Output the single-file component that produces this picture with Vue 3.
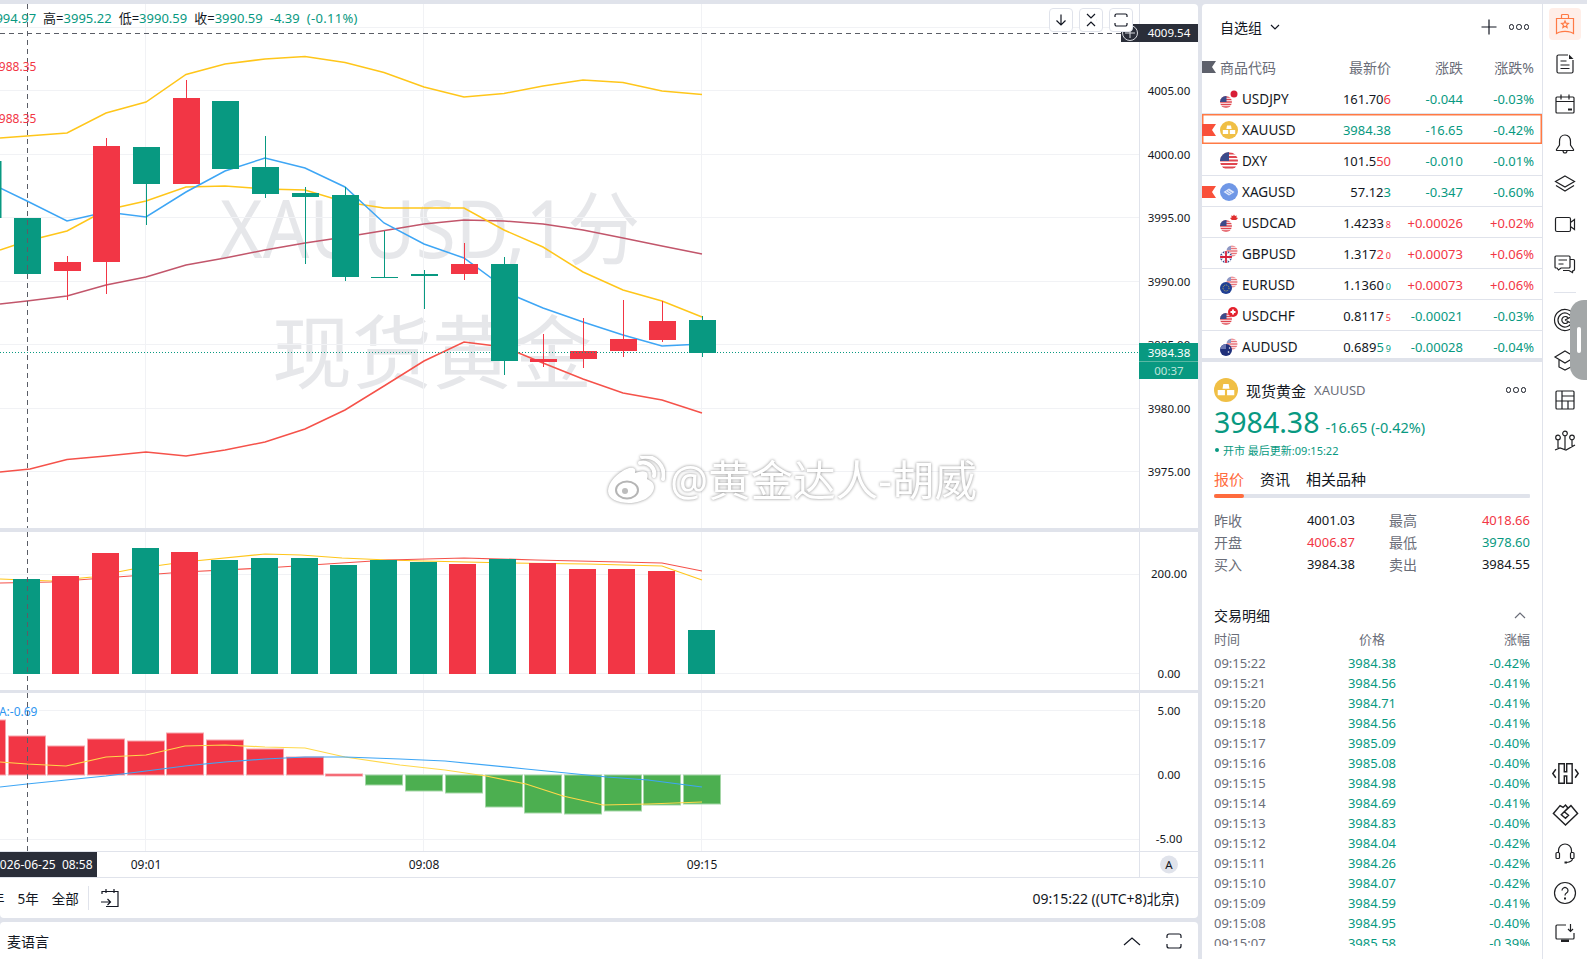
<script setup>
// 主图数据，坐标直接取图上的像素
const candles = [
  [-12, 161, 218, 161, 218, 'g'],
  [27.5, 218, 274, 218, 274, 'g'],
  [67.5, 262, 271, 256, 300, 'r'],
  [106.5, 146, 262, 138, 294, 'r'],
  [146.5, 147, 184, 147, 225, 'g'],
  [186.5, 98, 184, 80, 184, 'r'],
  [225.5, 101, 169, 101, 169, 'g'],
  [265.5, 167, 194, 136, 198, 'g'],
  [305.5, 193, 197, 187, 264, 'g'],
  [345.5, 195, 277, 187, 281, 'g'],
  [384.5, 277, 278, 231, 278, 'g'],
  [424.5, 274, 276, 270, 309, 'g'],
  [464.5, 264, 274, 243, 280, 'r'],
  [504.5, 264, 361, 257, 375, 'g'],
  [543.5, 359, 362, 334, 367, 'r'],
  [583.5, 351, 359, 318, 368, 'r'],
  [623.5, 339, 351, 300, 357, 'r'],
  [662.5, 321, 340, 301, 342, 'r'],
  [702.5, 320, 353, 316, 357, 'g']
]

const mainLines = [
  { color: '#c2566b', points: '0,304 27,301 67,296 106,285 146,277 186,265 225,258 265,250 305,243 345,237 400,228 424,224 464,220 504,221 543,224 583,230 623,238 662,246 702,254' },
  { color: '#f5524a', points: '0,472 30,469 67,459.5 106,456 146,452 186,456 225,450 265,442 305,429 345,410 384,386 424,361 464,342 504,347 543,363 583,379 623,393 662,400 702,413' },
  { color: '#ffc61a', points: '0,138 27,136 67,133 106,113 146,102 186,74.5 225,64 265,59 305,56.5 345,62.5 384,72.5 424,87 464,97 504,93.5 543,86 583,80 623,82.5 662,91 702,94.5' },
  { color: '#ffc61a', points: '0,250 27,241 67,231 106,210 146,201 186,187 225,186 265,189 305,190 345,202 384,208 424,208 464,208 504,230 543,247 583,272 623,290 662,301 702,317' },
  { color: '#3ea6f5', points: '0,188 27,201 67,221 106,212 146,217 186,192 225,171 265,158 305,168 345,187 384,223 424,244 464,258 517,297 543,308 583,322 623,335 662,346 702,344' }
]

const priceTicks = [
  ['4010.00', 27], ['4005.00', 90], ['4000.00', 154], ['3995.00', 217],
  ['3990.00', 281], ['3985.00', 344], ['3980.00', 408], ['3975.00', 471]
]

const centers = [26.5, 65.5, 105.5, 145.5, 184.5, 224.5, 264.5, 304.5, 343.5, 383.5, 423.5, 462.5, 502.5, 542.5, 582.5, 621.5, 661.5, 701.5]

// 成交量柱顶部
const volumes = [579, 576, 553, 548, 552, 560, 558, 558, 565, 560, 562, 564, 559, 563, 569, 569, 571, 630]
const volColors = 'grrgrggggggrgrrrrg'

const volLines = [
  { color: '#ffc61a', points: '0,579 51,581 92,577 133,569 184,562 265,554 301,555 342,558 388,560 423,561 510,563 587,564 662,566 702,580' },
  { color: '#f5524a', points: '0,583 51,582 117,577 184,572 265,568 342,563 388,560 464,558 536,560 662,563 702,571' }
]

// MACD 柱，[中心, 顶, 底]
const macdBars = [
  [-13, 720, 775, 'r'], [27, 736, 775, 'r'], [66, 746, 775, 'r'], [106, 739, 775, 'r'], [146, 741, 775, 'r'],
  [185, 733, 775, 'r'], [225, 740, 775, 'r'], [265, 749, 775, 'r'], [305, 757, 775, 'r'], [344, 774, 776, 'r'],
  [384, 775, 785, 'g'], [424, 775, 791, 'g'], [464, 775, 793, 'g'], [504, 775, 807, 'g'], [543, 775, 813, 'g'],
  [583, 775, 814, 'g'], [623, 775, 811, 'g'], [662, 775, 805, 'g'], [702, 775, 804, 'g']
]

const macdLines = [
  { color: '#ffd84a', points: '0,762 27,764 66,766 106,757 146,755 185,746 225,745 265,747 305,748 345,757 400,765 445,770 486,776 526,784 563,796 603,805 648,804 702,802' },
  { color: '#3ea6f5', points: '0,787 27,784 66,780 106,776 146,771 185,766 225,762 265,759 305,757 345,757 400,759 445,761 526,769 607,777 648,780 702,787' }
]

const watchlist = [
  { flag: '', icon: 'jpy', name: 'USDJPY', price: '161.70', hi: '6', hiColor: 'up', chg: '-0.044', pct: '-0.03%', dir: 'down' },
  { flag: 'red', icon: 'gold', name: 'XAUUSD', price: '', hi: '3984.38', hiColor: 'down', chg: '-16.65', pct: '-0.42%', dir: 'down', active: true },
  { flag: '', icon: 'dxy', name: 'DXY', price: '101.5', hi: '50', hiColor: 'up', chg: '-0.010', pct: '-0.01%', dir: 'down' },
  { flag: 'red', icon: 'silver', name: 'XAGUSD', price: '57.12', hi: '3', hiColor: 'down', chg: '-0.347', pct: '-0.60%', dir: 'down' },
  { flag: '', icon: 'cad', name: 'USDCAD', price: '1.4233', small: '8', hiColor: 'up', chg: '+0.00026', pct: '+0.02%', dir: 'up' },
  { flag: '', icon: 'gbp', name: 'GBPUSD', price: '1.317', hi: '2', small: '0', hiColor: 'up', chg: '+0.00073', pct: '+0.06%', dir: 'up' },
  { flag: '', icon: 'eur', name: 'EURUSD', price: '1.1360', small: '0', hiColor: 'down', chg: '+0.00073', pct: '+0.06%', dir: 'up' },
  { flag: '', icon: 'chf', name: 'USDCHF', price: '0.8117', small: '5', hiColor: 'up', chg: '-0.00021', pct: '-0.03%', dir: 'down' },
  { flag: '', icon: 'aud', name: 'AUDUSD', price: '0.689', hi: '5', small: '9', hiColor: 'down', chg: '-0.00028', pct: '-0.04%', dir: 'down' }
]

const trades = [
  ['09:15:22', '3984.38', '-0.42%'], ['09:15:21', '3984.56', '-0.41%'], ['09:15:20', '3984.71', '-0.41%'],
  ['09:15:18', '3984.56', '-0.41%'], ['09:15:17', '3985.09', '-0.40%'], ['09:15:16', '3985.08', '-0.40%'],
  ['09:15:15', '3984.98', '-0.40%'], ['09:15:14', '3984.69', '-0.41%'], ['09:15:13', '3984.83', '-0.40%'],
  ['09:15:12', '3984.04', '-0.42%'], ['09:15:11', '3984.26', '-0.42%'], ['09:15:10', '3984.07', '-0.42%'],
  ['09:15:09', '3984.59', '-0.41%'], ['09:15:08', '3984.95', '-0.40%'], ['09:15:07', '3985.58', '-0.39%']
]

// 右侧工具条图标
const railTop = [
  { active: true, d: 'M3.5 6.5h17v15l-2.500-1.200q-6-1.800-12 0l-2.500 1.200zM8.500 6.500v-3a1 1 0 0 1 1-1h5a1 1 0 0 1 1 1v3M12 9l1 2.200 2.400.3-1.800 1.600.5 2.400-2.100-1.200-2.100 1.200.5-2.400-1.800-1.600 2.400-.3z' },
  { d: 'M15 3H5.500A1.500 1.500 0 0 0 4 4.500v15A1.500 1.500 0 0 0 5.500 21h13a1.500 1.500 0 0 0 1.500-1.500V8M7.500 9h6M7.500 13h9M7.500 16.500h9', f: 'M16 2.500l4.500 4.500H16z' },
  { d: 'M4 5h16a1 1 0 0 1 1 1v14a1 1 0 0 1-1 1H4a1 1 0 0 1-1-1V6a1 1 0 0 1 1-1zM3 9.500h18M8 2.500v5M16 2.500v5', f: 'M15 16.500h4v2h-4z' },
  { d: 'M12 3c-3.600 0-5.500 3-5.500 6.500V13l-3 4.500c-.3.500 0 1 .6 1h15.800c.6 0 .9-.5.6-1l-3-4.500V9.500C17.500 6 15.600 3 12 3zM10 18.500c0 1.500.9 2.500 2 2.500s2-1 2-2.500' },
  { d: 'M12 4l9.500 5.500L12 15 2.500 9.500zM3 13.500 12 19l9-5.500' },
  { d: 'M4 5.500h12a1.500 1.500 0 0 1 1.500 1.500v11a1.500 1.500 0 0 1-1.500 1.500H4A1.500 1.500 0 0 1 2.500 18V7A1.500 1.500 0 0 1 4 5.500zM17.500 10.500l4-3v10l-4-3' },
  { d: 'M3 4h13a1 1 0 0 1 1 1v10a1 1 0 0 1-1 1H8l-2.500 2L4 16H3a1 1 0 0 1-1-1V5a1 1 0 0 1 1-1zM5.500 8h8.500M5.500 12h5M17 7.500h3.500a1 1 0 0 1 1 1v9a1 1 0 0 1-1 1H20l-.5 2-3.500-2h-6' }
]
const railMid = [
  { d: 'M21.500 7.500A10.500 10.500 0 1 0 21.500 16.500M18.500 9.500A7 7 0 1 0 18.500 14.500M15.500 10.500A3.500 3.500 0 1 0 15.500 13.500M12 12l10-5M12 12l10 5' },
  { d: 'M12 3l10 6-10 6L2 9zM6 12v7l6 3 6-3v-7' },
  { d: 'M4 3h16a1 1 0 0 1 1 1v16a1 1 0 0 1-1 1H4a1 1 0 0 1-1-1V4a1 1 0 0 1 1-1zM9 3v18M9 8h12M3 13h18M15 13v8' },
  { d: 'M2 22l5-2 6 2 9-5M5 12v8M12 8v13M19 12v7M7.300 9.500a2.300 2.300 0 1 1-4.600 0 2.300 2.300 0 0 1 4.600 0zM14.300 5.500a2.300 2.300 0 1 1-4.600 0 2.300 2.300 0 0 1 4.600 0zM21.300 9.500a2.300 2.300 0 1 1-4.600 0 2.300 2.300 0 0 1 4.600 0z' }
]
const railBottom = [
  { size: 29, d: 'M4 8.500 1.500 12 4 15.500M20 8.500l2.500 3.500-2.500 3.500M6.500 4H11v6.500h2V4h4.500v16H13v-6h-2v6H6.500z' },
  { size: 29, d: 'M7.500 5.500 2 12l10 9.500L22 12l-5.500-6.500-5.500 5 3.500 3-2.500 2.500-3.500-3 5.500-5.500-2-2.500-2 2-2.500-1.500z' },
  { d: 'M5.500 12V9.500a6.500 6.500 0 0 1 13 0V12M4 11.500h1.500a1 1 0 0 1 1 1v4a1 1 0 0 1-1 1H4a1 1 0 0 1-1-1v-4a1 1 0 0 1 1-1zM18.500 11.500H20a1 1 0 0 1 1 1v4a1 1 0 0 1-1 1h-1.500a1 1 0 0 1-1-1v-4a1 1 0 0 1 1-1zM19.500 17.500c0 2-2.500 3.500-6 4', f: 'M11.500 20.500h2.500v2h-2.500z' },
  { d: 'M22.500 12a10.500 10.500 0 1 1-21 0 10.500 10.500 0 0 1 21 0zM9 9.500a3 3 0 1 1 4.500 2.600c-1 .6-1.500 1.200-1.500 2.400', f: 'M11 16.500h2v2h-2z' },
  { d: 'M13 4H4a1 1 0 0 0-1 1v12a1 1 0 0 0 1 1h16a1 1 0 0 0 1-1v-5M17.500 3v7M15 8l2.500 2.500L20 8', f: 'M8 18.500h8V21H8z' }
]
</script>

<template>
  <div class="page">
    <!-- 隐藏的图标定义 -->
    <svg class="defs" width="0" height="0">
      <defs>
        <clipPath id="c-big"><circle cx="10" cy="10" r="9" /></clipPath>
        <clipPath id="c-ll"><circle cx="7" cy="13" r="6" /></clipPath>
        <clipPath id="c-ur"><circle cx="13" cy="7" r="5.500" /></clipPath>
        <g id="us-ll" clip-path="url(#c-ll)">
          <rect x="1" y="7" width="12" height="12" fill="#fff" />
          <path d="M1 8h12M1 10.500h12M1 13h12M1 15.500h12M1 18h12" stroke="#e0464f" stroke-width="1.300" />
          <rect x="1" y="7" width="6.500" height="6" fill="#3b4a8a" />
        </g>
        <g id="us-ur" clip-path="url(#c-ur)" opacity=".75">
          <rect x="7" y="1" width="12" height="12" fill="#fff" />
          <path d="M7 2h12M7 4.500h12M7 7h12M7 9.500h12M7 12h12" stroke="#e0464f" stroke-width="1.300" />
          <rect x="7" y="1" width="5" height="5" fill="#6a76b0" />
        </g>
        <g id="us-big" clip-path="url(#c-big)">
          <rect x="1" y="1" width="18" height="18" fill="#fff" />
          <path d="M1 2.500h18M1 6h18M1 9.500h18M1 13h18M1 16.500h18" stroke="#e0464f" stroke-width="1.800" />
          <rect x="1" y="1" width="9" height="9" fill="#3b4a8a" />
        </g>
        <g id="gold-coin">
          <circle cx="10" cy="10" r="9" fill="#f0bf45" />
          <path d="M8 5.500h4l.6 3.500H7.400zM3.800 10h5.400v4H3.800zM10.800 10h5.400v4h-5.400z" fill="#fff" />
        </g>
      </defs>
    </svg>

    <main class="left">
      <!-- K线主图 -->
      <section class="pane pane-main">
        <svg class="plot" width="1198" height="524" viewBox="0 4 1198 524">
          <text class="wm" x="220" y="258" textLength="420" lengthAdjust="spacingAndGlyphs">XAUUSD,1分</text>
          <text class="wm" x="272" y="382">现货黄金</text>
          <g class="grid">
            <line v-for="t in priceTicks" :key="t[0]" x1="0" x2="1139" :y1="t[1] + 0.500" :y2="t[1] + 0.500" />
            <line x1="145.500" x2="145.500" y1="4" y2="528" />
            <line x1="423.500" x2="423.500" y1="4" y2="528" />
            <line x1="701.500" x2="701.500" y1="4" y2="528" />
          </g>
          <polyline v-for="(l, i) in mainLines" :key="i" :points="l.points" :stroke="l.color" fill="none" stroke-width="1.500" />
          <g v-for="c in candles" :key="c[0]" :class="c[5] === 'g' ? 'bar-g' : 'bar-r'">
            <rect :x="c[0] - 0.500" :y="c[3]" width="1" :height="c[4] - c[3]" />
            <rect :x="c[0] - 13.500" :y="c[1]" width="27" :height="c[2] - c[1]" />
          </g>
          <line class="last-line" x1="0" x2="1139" y1="352.500" y2="352.500" />
          <line class="cross" x1="0" x2="1139" y1="33.500" y2="33.500" />
          <line class="cross" x1="27.500" x2="27.500" y1="4" y2="528" />
          <text class="red-label" x="-8" y="71">3988.35</text>
          <text class="red-label" x="-8" y="123">3988.35</text>
          <line class="axis-line" x1="1139.500" x2="1139.500" y1="4" y2="528" />
          <text v-for="t in priceTicks" :key="t[0]" class="tick" x="1169" :y="t[1] + 4.500">{{ t[0] }}</text>
          <rect x="1121" y="24" width="77" height="18" fill="#2a2e39" />
          <circle cx="1130" cy="33" r="7.500" fill="none" stroke="#d8dae0" stroke-width="1" />
          <path d="M1130 28v10M1125 33h10" stroke="#d8dae0" stroke-width="1" />
          <text class="tick tick-white" x="1169" y="37">4009.54</text>
          <rect x="1139" y="343" width="59" height="36" fill="#089981" />
          <line x1="1139" x2="1198" y1="361.500" y2="361.500" stroke="#5bb8a4" />
          <text class="tick tick-white" x="1169" y="356.500">3984.38</text>
          <text class="tick tick-soft" x="1169" y="375">00:37</text>
        </svg>

        <div class="legend">
          <span class="green">3994.97</span>
          <span>高=<b>3995.22</b></span>
          <span>低=<b>3990.59</b></span>
          <span>收=<b>3990.59</b></span>
          <span class="green">-4.39</span>
          <span class="green legend-pct">(-0.11%)</span>
        </div>

        <div class="tools">
          <button class="tool-btn">
            <svg width="16" height="16" viewBox="0 0 16 16"><path d="M8 2.500v10M3.500 8.500 8 13l4.500-4.500" /></svg>
          </button>
          <button class="tool-btn">
            <svg width="16" height="16" viewBox="0 0 16 16"><path d="M4 2l4 4 4-4M4 14l4-4 4 4M3 8h.1M13 8h.1" /></svg>
          </button>
          <button class="tool-btn">
            <svg width="16" height="16" viewBox="0 0 16 16"><path d="M2 5V3.500A1.500 1.500 0 0 1 3.500 2h9A1.500 1.500 0 0 1 14 3.500V5M2 11v1.500A1.500 1.500 0 0 0 3.500 14h9a1.500 1.500 0 0 0 1.500-1.500V11" /></svg>
          </button>
        </div>

        <!-- 微博水印 -->
        <div class="weibo">
          <svg width="58" height="48" viewBox="0 0 58 48">
            <path d="M22 12C10 16 1 27 1 35c0 8 10 12 21 12 13 0 25-7 25-16 0-5-5-7-7-8 1-3 1-6-1-7-3-2-8 0-11 1 1-3 0-6-6-5z" fill="#fff" />
            <ellipse cx="20" cy="34" rx="11" ry="8.500" fill="none" stroke="#b5b5b5" stroke-width="2" />
            <circle cx="18" cy="35" r="3" fill="#bdbdbd" />
            <path d="M33 7c8-2 16 5 14 13M35 1c13-2 24 9 21 22" fill="none" stroke="#fff" stroke-width="4" stroke-linecap="round" />
          </svg>
          <span>@黄金达人-胡威</span>
        </div>
      </section>

      <!-- 成交量 -->
      <section class="pane pane-vol">
        <svg class="plot" width="1198" height="158" viewBox="0 532 1198 158">
          <g class="grid">
            <line x1="0" x2="1139" y1="574.500" y2="574.500" />
            <line x1="0" x2="1139" y1="673.500" y2="673.500" />
            <line x1="145.500" x2="145.500" y1="532" y2="690" />
            <line x1="423.500" x2="423.500" y1="532" y2="690" />
            <line x1="701.500" x2="701.500" y1="532" y2="690" />
          </g>
          <polyline v-for="(l, i) in volLines" :key="i" :points="l.points" :stroke="l.color" fill="none" stroke-width="1.200" />
          <rect v-for="(top, i) in volumes" :key="i" :class="volColors[i] === 'g' ? 'bar-g' : 'bar-r'"
            :x="centers[i] - 13.500" :y="top" width="27" :height="674 - top" />
          <line class="cross" x1="27.500" x2="27.500" y1="532" y2="690" />
          <line class="axis-line" x1="1139.500" x2="1139.500" y1="532" y2="690" />
          <text class="tick" x="1169" y="578">200.00</text>
          <text class="tick" x="1169" y="678">0.00</text>
        </svg>
      </section>

      <!-- MACD -->
      <section class="pane pane-macd">
        <svg class="plot" width="1198" height="158" viewBox="0 693 1198 158">
          <g class="grid">
            <line x1="0" x2="1139" y1="710.500" y2="710.500" />
            <line x1="0" x2="1139" y1="774.500" y2="774.500" />
            <line x1="0" x2="1139" y1="839.500" y2="839.500" />
            <line x1="145.500" x2="145.500" y1="693" y2="851" />
            <line x1="423.500" x2="423.500" y1="693" y2="851" />
            <line x1="701.500" x2="701.500" y1="693" y2="851" />
          </g>
          <rect v-for="b in macdBars" :key="b[0]" :class="b[3] === 'g' ? 'macd-g' : 'macd-r'"
            :x="b[0] - 18.500" :y="b[1]" width="37" :height="b[2] - b[1]" />
          <polyline v-for="(l, i) in macdLines" :key="i" :points="l.points" :stroke="l.color" fill="none" stroke-width="1.200" />
          <rect x="0" y="704" width="39" height="14" fill="#fff" />
          <text class="macd-label" x="-12" y="716">MA:-0.69</text>
          <line class="cross" x1="27.500" x2="27.500" y1="693" y2="851" />
          <line class="axis-line" x1="1139.500" x2="1139.500" y1="693" y2="851" />
          <text class="tick" x="1169" y="715">5.00</text>
          <text class="tick" x="1169" y="779">0.00</text>
          <text class="tick" x="1169" y="843">-5.00</text>
        </svg>
      </section>

      <!-- 时间轴 -->
      <section class="time-axis">
        <svg class="plot" width="1198" height="26" viewBox="0 851 1198 26">
          <rect x="0" y="852" width="97" height="25" fill="#2a2e39" />
          <text class="time time-white" x="-7" y="869">2026-06-25&#160;&#160;08:58</text>
          <text class="time" x="146" y="869" text-anchor="middle">09:01</text>
          <text class="time" x="424" y="869" text-anchor="middle">09:08</text>
          <text class="time" x="702" y="869" text-anchor="middle">09:15</text>
          <line class="axis-line" x1="1139.500" x2="1139.500" y1="852" y2="877" />
          <circle cx="1169" cy="864.500" r="9" fill="#e0e3eb" />
          <text class="tick" x="1169" y="869">A</text>
        </svg>
      </section>

      <section class="bottom-tools">
        <span class="cut">年</span>
        <span>5年</span>
        <span>全部</span>
        <i class="tool-sep"></i>
        <svg class="goto" width="20" height="20" viewBox="0 0 20 20">
          <path d="M2 6V3.500h16V18.500H6M6 1v4M14 1v4M1 14h9M7.500 11l3 3-3 3" />
        </svg>
        <span class="clock">09:15:22 ((UTC+8)北京)</span>
      </section>

      <section class="editor-bar">
        <span>麦语言</span>
        <svg class="chev" width="18" height="10" viewBox="0 0 18 10"><path d="M1 9l8-7 8 7" /></svg>
        <svg class="full" width="16" height="16" viewBox="0 0 16 16">
          <path d="M1 5V3a2 2 0 0 1 2-2h10a2 2 0 0 1 2 2v2M1 11v2a2 2 0 0 0 2 2h10a2 2 0 0 0 2-2v-2" />
        </svg>
      </section>
    </main>

    <aside class="side">
      <!-- 自选列表 -->
      <section class="watch">
        <div class="watch-top">
          <span>自选组</span>
          <svg class="watch-chev" width="10" height="6" viewBox="0 0 10 6"><path d="M1 1l4 4 4-4" /></svg>
          <svg class="watch-plus" width="16" height="16" viewBox="0 0 16 16"><path d="M8 0.500v15M0.500 8h15" /></svg>
          <span class="dots"><i></i><i></i><i></i></span>
        </div>
        <div class="watch-row watch-head">
          <svg width="14" height="12" viewBox="0 0 14 12"><path d="M0 0h14l-4 6 4 6H0z" fill="#5d606b" /></svg>
          <span class="head-name">商品代码</span>
          <span class="num">最新价</span>
          <span class="num">涨跌</span>
          <span class="num">涨跌%</span>
        </div>
        <div v-for="w in watchlist" :key="w.name" class="watch-row" :class="{ active: w.active }">
          <svg width="14" height="12" viewBox="0 0 14 12">
            <path v-if="w.flag" d="M0 0h14l-4 6 4 6H0z" fill="#f9503a" />
          </svg>
          <svg class="sym-icon" width="20" height="20" viewBox="0 0 20 20">
            <template v-if="w.icon === 'gold'"><use href="#gold-coin" /></template>
            <template v-else-if="w.icon === 'dxy'"><use href="#us-big" /></template>
            <template v-else-if="w.icon === 'silver'">
              <circle cx="10" cy="10" r="9" fill="#6f97e6" />
              <path d="M4.500 10 10 6.500 15.500 10 10 13.500z" fill="#dfe8fb" />
              <path d="M7 9.500l4 2.500M9 8.500l4 2.500" stroke="#6f97e6" stroke-width=".7" />
            </template>
            <template v-else-if="w.icon === 'jpy'">
              <use href="#us-ll" /><circle cx="15" cy="5" r="3.500" fill="#d81e36" />
            </template>
            <template v-else-if="w.icon === 'cad'">
              <use href="#us-ll" /><path d="M15 1.500l1 1.500 1.800-.5-.5 2 1.700.6-1.800 1.800h-4.400L11 5.100l1.700-.6-.5-2 1.800.5z" fill="#e03030" />
            </template>
            <template v-else-if="w.icon === 'chf'">
              <use href="#us-ll" /><circle cx="14" cy="6" r="5" fill="#e4222e" /><path d="M11.500 6h5M14 3.500v5" stroke="#fff" stroke-width="1.800" />
            </template>
            <template v-else>
              <use href="#us-ur" />
              <g clip-path="url(#c-ll)">
                <template v-if="w.icon === 'gbp'">
                  <rect x="1" y="7" width="12" height="12" fill="#2b3f87" />
                  <path d="M1 7l12 12M13 7 1 19" stroke="#fff" stroke-width="2" />
                  <path d="M7 7v12M1 13h12" stroke="#fff" stroke-width="3.500" />
                  <path d="M7 7v12M1 13h12" stroke="#d6203a" stroke-width="1.800" />
                </template>
                <template v-else-if="w.icon === 'eur'">
                  <rect x="1" y="7" width="12" height="12" fill="#1f3f94" />
                  <circle cx="7" cy="13" r="3" fill="none" stroke="#e6cf4a" stroke-width=".8" stroke-dasharray="1 1" />
                </template>
                <template v-else>
                  <rect x="1" y="7" width="12" height="12" fill="#1f2f7a" />
                  <path d="M1 7h6v5H1z" fill="#6c78b5" />
                  <circle cx="9.500" cy="15" r=".8" fill="#fff" /><circle cx="10.500" cy="11" r=".7" fill="#fff" />
                </template>
              </g>
            </template>
          </svg>
          <span class="sym-name">{{ w.name }}</span>
          <span class="num">{{ w.price }}<span v-if="w.hi" :class="w.hiColor">{{ w.hi }}</span><span v-if="w.small" class="tiny" :class="w.hiColor">{{ w.small }}</span></span>
          <span class="num" :class="w.dir">{{ w.chg }}</span>
          <span class="num" :class="w.dir">{{ w.pct }}</span>
        </div>
      </section>

      <!-- 品种详情 -->
      <section class="detail">
        <div class="d-head">
          <svg width="24" height="24" viewBox="1 1 18 18"><use href="#gold-coin" /></svg>
          <span class="d-title">现货黄金</span>
          <span class="d-code">XAUUSD</span>
          <span class="dots"><i></i><i></i><i></i></span>
        </div>
        <div class="d-price down">
          <span class="d-big">3984.38</span>
          <span class="d-chg">-16.65 (-0.42%)</span>
        </div>
        <div class="d-status down"><i></i>开市 最后更新:09:15:22</div>
        <div class="d-tabs">
          <span class="tab-on">报价</span>
          <span>资讯</span>
          <span>相关品种</span>
        </div>
        <div class="d-bar"><i></i></div>
        <div class="d-stats">
          <div><label>昨收</label><span>4001.03</span></div>
          <div><label>最高</label><span class="up">4018.66</span></div>
          <div><label>开盘</label><span class="up">4006.87</span></div>
          <div><label>最低</label><span class="down">3978.60</span></div>
          <div><label>买入</label><span>3984.38</span></div>
          <div><label>卖出</label><span>3984.55</span></div>
        </div>
        <div class="d-trade-title">
          <span>交易明细</span>
          <svg width="12" height="7" viewBox="0 0 12 7"><path d="M1 6l5-5 5 5" /></svg>
        </div>
        <div class="trade-row trade-head">
          <span>时间</span><span>价格</span><span>涨幅</span>
        </div>
        <div class="trade-list">
          <div v-for="t in trades" :key="t[0]" class="trade-row">
            <span class="t-time">{{ t[0] }}</span>
            <span class="down">{{ t[1] }}</span>
            <span class="down">{{ t[2] }}</span>
          </div>
        </div>
      </section>
    </aside>

    <!-- 工具条 -->
    <nav class="rail">
      <div v-for="(ic, i) in railTop" :key="i" class="rail-item" :class="{ on: ic.active }">
        <svg width="24" height="24" viewBox="0 0 24 24">
          <path :d="ic.d" /><path v-if="ic.f" :d="ic.f" class="solid" />
        </svg>
      </div>
      <div class="rail-sep"></div>
      <div v-for="(ic, i) in railMid" :key="'m' + i" class="rail-item">
        <svg width="24" height="24" viewBox="0 0 24 24"><path :d="ic.d" /></svg>
      </div>
      <div class="rail-bottom">
        <div v-for="(ic, i) in railBottom" :key="'b' + i" class="rail-item">
          <svg :width="ic.size || 24" :height="ic.size || 24" viewBox="0 0 24 24">
            <path :d="ic.d" /><path v-if="ic.f" :d="ic.f" class="solid" />
          </svg>
        </div>
      </div>
      <div class="rail-handle"><i></i></div>
    </nav>
  </div>
</template>

<style>
html, body {
  margin: 0;
  background: #e0e3eb;
}
</style>

<style scoped>
.page {
  position: relative;
  display: flex;
  width: 1587px;
  height: 959px;
  padding-top: 4px;
  box-sizing: border-box;
  overflow: hidden;
  background: #e0e3eb;
  color: #131722;
  font-family: "Noto Sans", "Noto Sans CJK SC", sans-serif;
  font-size: 13px;
}
.defs { position: absolute; }

.left {
  display: flex;
  flex-direction: column;
  width: 1198px;
  flex: none;
}
.pane {
  position: relative;
  flex: none;
  background: #fff;
  overflow: hidden;
}
.pane-main { height: 524px; margin-bottom: 4px; border-top-right-radius: 4px; }
.pane-vol { height: 158px; margin-bottom: 3px; }
.pane-macd { height: 158px; }
.plot { display: block; }

.grid line { stroke: #f1f2f5; stroke-width: 1; }
.bar-g { fill: #089981; }
.bar-r { fill: #f23645; }
.macd-g { fill: #4caf50; stroke: #a5d6a7; stroke-width: 1; }
.macd-r { fill: #f23645; stroke: #f7a3ab; stroke-width: 1; }
.cross { stroke: #5a5d66; stroke-width: 1; stroke-dasharray: 5 4; }
.last-line { stroke: #089981; stroke-width: 1; stroke-dasharray: 1 2; }
.axis-line { stroke: #e0e3eb; stroke-width: 1; }
.tick { font-size: 11.500px; fill: #131722; text-anchor: middle; }
.tick-white { fill: #fff; }
.tick-soft { fill: #bfe5db; }
.time { font-size: 12px; fill: #131722; }
.time-white { fill: #fff; }
.red-label { font-size: 12px; fill: #f23645; }
.macd-label { font-size: 12px; fill: #2f96f0; }
.wm { font-size: 80px; fill: #e6e7ea; }

.legend {
  position: absolute;
  left: -12px;
  top: 5px;
  display: flex;
  gap: 7px;
  font-size: 13px;
  line-height: 18px;
  white-space: nowrap;
}
.legend b { font-weight: 400; color: #089981; }
.green { color: #089981; }
.legend-pct { letter-spacing: .3px; }

.tools {
  position: absolute;
  top: 4px;
  left: 1049px;
  display: flex;
  gap: 6px;
}
.tool-btn {
  display: flex;
  align-items: center;
  justify-content: center;
  width: 24px;
  height: 24px;
  padding: 0;
  background: #fff;
  border: 1px solid #e0e3eb;
  border-radius: 4px;
}
.tool-btn path { fill: none; stroke: #131722; stroke-width: 1.200; }

.weibo {
  position: absolute;
  left: 607px;
  top: 452px;
  display: flex;
  align-items: center;
  gap: 5px;
  filter: drop-shadow(0 0 1.500px rgba(0, 0, 0, .45));
}
.weibo span {
  font-size: 42.500px;
  line-height: 48px;
  color: #fff;
  white-space: nowrap;
}

.time-axis {
  height: 26px;
  flex: none;
  background: #fff;
  box-shadow: inset 0 1px 0 #e0e3eb;
  overflow: hidden;
}
.bottom-tools {
  display: flex;
  align-items: center;
  gap: 13px;
  height: 41px;
  flex: none;
  background: #fff;
  border-top: 1px solid #e0e3eb;
  box-sizing: border-box;
  border-radius: 0 0 4px 4px;
  font-size: 13.500px;
}
.cut { margin-left: -9px; }
.tool-sep { width: 1px; height: 24px; margin: 0 -2px 0 -4px; background: #e0e3eb; }
.goto path { fill: none; stroke: #131722; stroke-width: 1.200; }
.clock { margin-left: auto; padding-right: 19px; font-size: 14px; }

.editor-bar {
  display: flex;
  align-items: center;
  height: 37px;
  flex: none;
  margin-top: 4px;
  padding-left: 7px;
  background: #fff;
  border-radius: 4px 4px 0 0;
  font-size: 14px;
}
.chev { margin-left: auto; }
.chev path, .full path { fill: none; stroke: #131722; stroke-width: 1.200; }
.full { margin: 0 16px 0 25px; }

.side {
  display: flex;
  flex-direction: column;
  width: 340px;
  flex: none;
  margin-left: 4px;
}
.watch {
  height: 354px;
  flex: none;
  background: #fff;
  overflow: hidden;
  border-top-left-radius: 4px;
}
.watch-top {
  display: flex;
  align-items: center;
  height: 46px;
  padding: 0 13px 0 18px;
  font-size: 14px;
}
.watch-chev { margin-left: 8px; }
.watch-chev path { fill: none; stroke: #131722; stroke-width: 1.200; }
.watch-plus { margin-left: auto; margin-right: 12px; }
.watch-plus path { fill: none; stroke: #131722; stroke-width: 1.200; }
.dots { display: flex; gap: 2px; }
.dots i {
  display: block;
  box-sizing: content-box;
  width: 3.500px;
  height: 3.500px;
  border: 1px solid #131722;
  border-radius: 50%;
}
.watch-row {
  display: grid;
  grid-template-columns: 14px 20px 84px 71px 72px 71px;
  align-items: center;
  height: 31px;
  padding: 1px 8px 0 0;
  box-sizing: border-box;
  border-bottom: 1px solid #e0e3eb;
  font-size: 13px;
}
.watch-row > svg:first-child { justify-self: start; }
.sym-icon { margin-left: 3px; }
.sym-name { margin-left: 6px; white-space: nowrap; font-size: 13.500px; }
.watch-head { height: 33px; padding-top: 0; border-bottom: 0; color: #6a6d78; font-size: 14px; }
.head-name {
  grid-column: 2 / 4;
  margin-left: 4px;
  font-size: 14px;
}
.num { text-align: right; white-space: nowrap; }
.tiny { font-size: 9px; margin-left: 2px; }
.up { color: #f23645; }
.down { color: #089981; }
.active { box-shadow: inset 0 0 0 1.500px #ff7a45; border-bottom-color: transparent; }

.detail {
  display: flex;
  flex-direction: column;
  flex: 1;
  margin-top: 4px;
  padding: 0 12px;
  background: #fff;
  min-height: 0;
}
.d-head {
  display: flex;
  align-items: center;
  height: 24px;
  margin-top: 16px;
}
.d-title { margin-left: 8px; font-size: 15px; }
.d-code { margin-left: 8px; color: #6a6d78; font-size: 13px; }
.d-head .dots { margin-left: auto; margin-right: 4px; }
.d-price {
  display: flex;
  align-items: baseline;
  height: 30px;
  margin-top: 5px;
  line-height: 30px;
}
.d-big { font-size: 28.500px; }
.d-chg { margin-left: 6px; font-size: 14.500px; }
.d-status {
  display: flex;
  align-items: center;
  height: 16px;
  margin-top: 5px;
  font-size: 11px;
}
.d-status i {
  width: 4px;
  height: 4px;
  border-radius: 50%;
  background: #089981;
  margin: 0 4px 0 1px;
}
.d-tabs {
  display: flex;
  gap: 16px;
  height: 20px;
  margin-top: 11px;
  font-size: 15px;
  line-height: 20px;
}
.tab-on { color: #ff6b3d; }
.d-bar {
  height: 4px;
  margin-top: 5px;
  background: #e0e3eb;
  border-radius: 1px;
  flex: none;
}
.d-bar i { display: block; width: 30px; height: 4px; background: #ff6b3d; border-radius: 2px; }
.d-stats {
  display: grid;
  grid-template-columns: 141px 141px;
  column-gap: 34px;
  margin-top: 11px;
}
.d-stats div {
  display: flex;
  justify-content: space-between;
  align-items: center;
  height: 22px;
}
.d-stats label { color: #6a6d78; font-size: 14px; }
.d-trade-title {
  display: flex;
  justify-content: space-between;
  align-items: center;
  height: 20px;
  margin-top: 30px;
  font-size: 14px;
}
.d-trade-title svg { margin-right: 4px; }
.d-trade-title path { fill: none; stroke: #6a6d78; stroke-width: 1.200; }
.trade-row {
  display: grid;
  grid-template-columns: 1fr 1fr 1fr;
  height: 20px;
  line-height: 20px;
  font-size: 13px;
}
.trade-row span:nth-child(2) { text-align: center; }
.trade-row span:nth-child(3) { text-align: right; }
.trade-head {
  height: 18px;
  line-height: 18px;
  margin: 5px 0;
  color: #6a6d78;
}
.t-time { color: #6a6d78; }
.trade-list {
  height: 293px;
  overflow: hidden;
  flex: none;
}

.rail {
  position: relative;
  display: flex;
  flex-direction: column;
  align-items: center;
  flex: none;
  width: 44px;
  margin-left: 1px;
  background: #fff;
}
.rail-item {
  display: flex;
  align-items: center;
  justify-content: center;
  width: 32px;
  height: 40px;
  flex: none;
}
.rail-item svg path { fill: none; stroke: #1f2023; stroke-width: 1.200; }
.rail-item svg path.solid { fill: #1f2023; stroke: none; }
.rail-item.on {
  height: 32px;
  margin: 4px 0;
  background: #ffeee8;
  border-radius: 4px;
}
.rail-item.on svg path { stroke: #ff7a45; }
.rail-sep { width: 22px; height: 1px; margin: 8px 0 7px; background: #e0e3eb; flex: none; }
.rail-bottom { margin-top: auto; padding-bottom: 6px; }
.rail-handle {
  position: absolute;
  right: 0;
  top: 296px;
  width: 17px;
  height: 80px;
  background: #a3a7a8;
  border-radius: 14px 0 0 14px;
  display: flex;
  align-items: center;
  justify-content: center;
}
.rail-handle i {
  display: block;
  width: 4px;
  height: 26px;
  background: #fff;
  border-radius: 2px;
}
</style>
